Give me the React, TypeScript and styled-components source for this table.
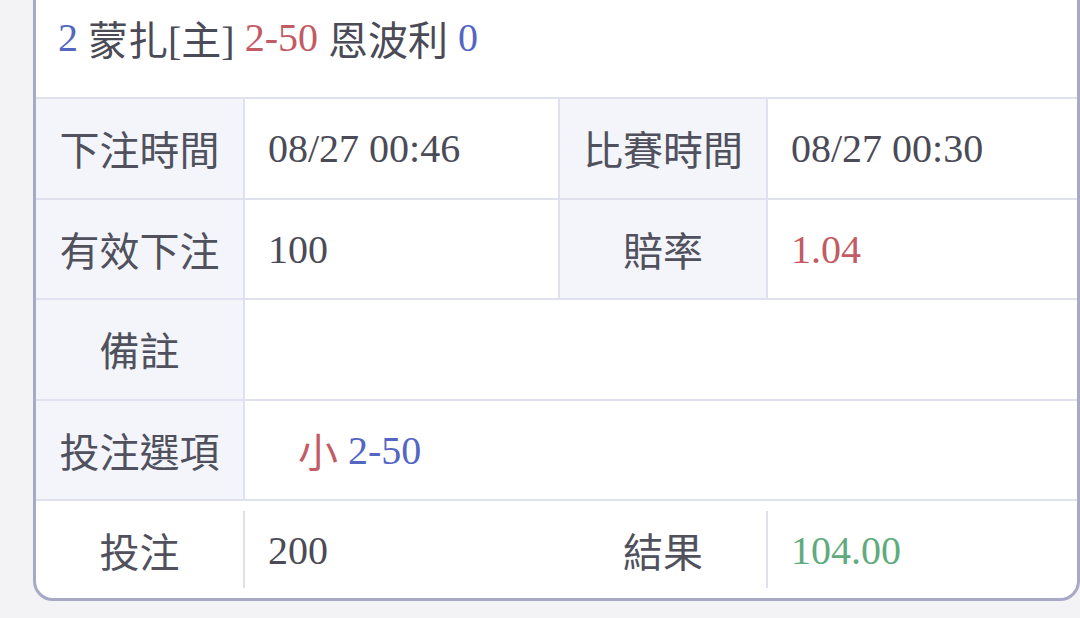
import styled, { createGlobalStyle } from "styled-components";

// ─── Global ──────────────────────────────────────────────────────────────────

const GlobalStyle = createGlobalStyle`
  html, body {
    margin: 0;
    padding: 0;
    background: #f3f3f5;
    overflow: hidden;
  }

  * {
    box-sizing: border-box;
  }
`;

// ─── Styled components ───────────────────────────────────────────────────────

const Page = styled.div`
  width: 1080px;
  height: 618px;
  padding-left: 33px;
  font-family: "Liberation Serif", "Noto Sans CJK TC", serif;
  color: #4a4b57;
`;

const Card = styled.div`
  width: 1047px;
  margin-top: -3px;
  background: #ffffff;
  border: 3px solid #a7a9c7;
  border-radius: 0 0 20px 20px;
  overflow: hidden;
`;

const Header = styled.div`
  height: 97px;
  padding: 0 22px 22px;
  display: flex;
  align-items: center;
  font-size: 40px;
  white-space: pre;
`;

const Tone = styled.span<{ $tone?: "red" | "blue" | "green" }>`
  color: ${({ $tone }) =>
    $tone === "red" ? "#c25b64" : $tone === "blue" ? "#5466c4" : $tone === "green" ? "#5fab7d" : "#4a4b57"};
`;

const Row = styled.div<{ $height: number }>`
  display: grid;
  grid-template-columns: 209px 315px 208px 1fr;
  height: ${({ $height }) => $height}px;
  border-top: 2px solid #e0e1ef;
  font-size: 40px;
`;

const Label = styled.div<{ $plain?: boolean }>`
  display: flex;
  align-items: center;
  justify-content: center;
  color: #50515d;
  background: ${({ $plain }) => ($plain ? "transparent" : "#f4f5fb")};
  border-right: 2px solid #e0e1ef;
  margin: ${({ $plain }) => ($plain ? "10px 0" : "0")};
`;

const Value = styled.div<{ $span?: number; $divider?: boolean; $indent?: number }>`
  display: flex;
  align-items: center;
  grid-column: span ${({ $span }) => $span ?? 1};
  padding-left: ${({ $indent }) => $indent ?? 23}px;
  padding-top: 1px;
  border-right: ${({ $divider }) => ($divider ? "2px solid #e0e1ef" : "none")};
  white-space: pre;
`;

// ─── Component ───────────────────────────────────────────────────────────────

export default function App() {
  return (
    <Page>
      <GlobalStyle />
      <Card>
        <Header>
          <Tone $tone="blue">2</Tone> 蒙扎[主] <Tone $tone="red">2-50</Tone> 恩波利 <Tone $tone="blue">0</Tone>
        </Header>

        <Row $height={100.5}>
          <Label>下注時間</Label>
          <Value $divider>08/27 00:46</Value>
          <Label>比賽時間</Label>
          <Value>08/27 00:30</Value>
        </Row>

        <Row $height={100.5}>
          <Label>有效下注</Label>
          <Value $divider>100</Value>
          <Label>賠率</Label>
          <Value>
            <Tone $tone="red">1.04</Tone>
          </Value>
        </Row>

        <Row $height={100.5}>
          <Label>備註</Label>
          <Value $span={3} />
        </Row>

        <Row $height={100.5}>
          <Label>投注選項</Label>
          <Value $span={3} $indent={53}>
            <Tone $tone="red">{"小 "}</Tone>
            <Tone $tone="blue">2-50</Tone>
          </Value>
        </Row>

        <Row $height={99}>
          <Label $plain>投注</Label>
          <Value>200</Value>
          <Label $plain>結果</Label>
          <Value>
            <Tone $tone="green">104.00</Tone>
          </Value>
        </Row>
      </Card>
    </Page>
  );
}
